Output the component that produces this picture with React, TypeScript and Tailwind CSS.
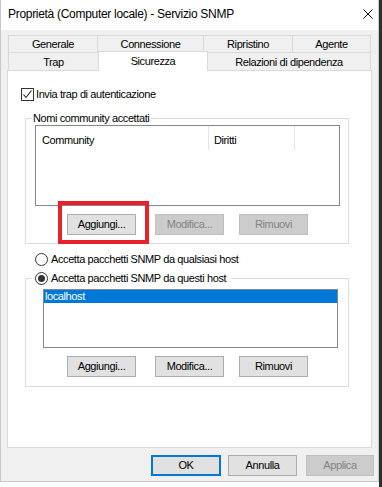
import type { ReactNode } from 'react';

const font = "font-['Liberation_Sans',Arial,sans-serif]";
const ui = `${font} text-[11px] leading-[13px] tracking-[-0.4px] text-black`;

function Btn({
  label,
  disabled,
  primary,
  className = '',
  children,
}: {
  label: string;
  disabled?: boolean;
  primary?: boolean;
  className?: string;
  children?: ReactNode;
}) {
  const look = disabled
    ? 'bg-[#cccccc] border border-[#bfbfbf] text-[#838383]'
    : primary
      ? 'bg-[#e1e1e1] border-2 border-[#0078d7] text-black'
      : 'bg-[#e1e1e1] border border-[#adadad] text-black';
  return (
    <div className={`relative h-[21px] shrink-0 ${className}`}>
      <div className={`h-full w-full flex items-center justify-center ${look}`}>{label}</div>
      {children}
    </div>
  );
}

function Tab({ label, className = '' }: { label: string; className?: string }) {
  return (
    <div
      className={`flex items-center justify-center border-t border-[#d9d9d9] bg-[#f0f0f0] ${className}`}
    >
      {label}
    </div>
  );
}

function Radio({ checked }: { checked?: boolean }) {
  return (
    <span className="w-[13px] h-[13px] rounded-full border border-[#333333] bg-white flex items-center justify-center shrink-0">
      {checked && <span className="w-[7px] h-[7px] rounded-full bg-[#333333]" />}
    </span>
  );
}

function ButtonRow({ first }: { first?: boolean }) {
  return (
    <div className="flex ml-[35px]">
      <Btn label="Aggiungi..." className="w-[69px]">
        {first && (
          <div className="absolute left-[-9px] top-[-13px] w-[91px] h-[43px] border-[4px] border-[#e8202a] pointer-events-none" />
        )}
      </Btn>
      <Btn label="Modifica..." disabled={first} className="w-[69px] ml-[19px]" />
      <Btn label="Rimuovi" disabled={first} className="w-[69px] ml-[15px]" />
    </div>
  );
}

export default function App() {
  return (
    <div className={`w-[382px] h-[487px] bg-white flex items-start ${ui}`}>
      <div className="w-[379px] h-[482px] flex flex-col border-l border-r border-b border-[#c9c9c9]">
        {/* title bar */}
        <div className="h-[30px] bg-white flex items-center justify-between shrink-0">
          <span className="pl-[7px] pb-[1px] text-[12px] tracking-[-0.3px] text-black">
            Proprietà (Computer locale) - Servizio SNMP
          </span>
          <svg width="10" height="10" viewBox="0 0 10 10" className="mr-[5px] mb-[3px]">
            <path d="M0.5 0.5 L9.5 9.5 M9.5 0.5 L0.5 9.5" stroke="#111" strokeWidth="1" />
          </svg>
        </div>

        <div className="flex-1 bg-[#f0f0f0] pt-[5px] pl-[6px] flex flex-col">
          {/* tabs */}
          <div className="flex ml-[1px] h-[17px]">
            <Tab label="Generale" className="w-[89px] border-l" />
            <Tab label="Connessione" className="w-[106px] border-l" />
            <Tab label="Ripristino" className="w-[89px] border-l" />
            <Tab label="Agente" className="w-[79px] border-l border-r" />
          </div>
          <div className="flex ml-[1px] h-[18px] items-end">
            <Tab label="Trap" className="w-[90px] h-[18px] border-l pt-[1px]" />
            <div className="relative z-10 w-[110px] h-[20px] -mb-[1px] bg-white border-t border-l border-r border-[#d9d9d9] flex items-center justify-center pb-[1px]">
              Sicurezza
            </div>
            <Tab label="Relazioni di dipendenza" className="w-[163px] h-[18px] border-r pt-[1px]" />
          </div>

          {/* tab page */}
          <div className="w-[365px] h-[378px] bg-white border border-[#d9d9d9] flex flex-col">
            <div className="flex items-center gap-[2px] mt-[17px] ml-[13px]">
              <span className="w-[13px] h-[13px] border border-[#333333] bg-white flex items-center justify-center">
                <svg width="11" height="11" viewBox="0 0 11 11">
                  <path d="M1.5 5.5 L4 8.5 L9.5 1.5" fill="none" stroke="#222" strokeWidth="1.1" />
                </svg>
              </span>
              <span>Invia trap di autenticazione</span>
            </div>

            <fieldset className="ml-[17px] mt-[11px] w-[324px] border border-[#dcdcdc] px-[6px] pb-[8px]">
              <legend className="px-[1px]">Nomi community accettati</legend>
              <div className="ml-[3px] w-[305px] h-[81px] border border-[#828790] bg-white">
                <div className="flex h-[24px]">
                  <div className="w-[172px] pl-[6px] pt-[8px]">Community</div>
                  <div className="w-px h-full bg-[#e5e5e5]" />
                  <div className="w-[85px] pl-[5px] pt-[8px]">Diritti</div>
                  <div className="w-px h-full bg-[#e5e5e5]" />
                </div>
              </div>
              <div className="mt-[8px]">
                <ButtonRow first />
              </div>
            </fieldset>

            <div className="flex items-center gap-[3px] ml-[27px] mt-[9px]">
              <Radio />
              <span>Accetta pacchetti SNMP da qualsiasi host</span>
            </div>

            <fieldset className="ml-[17px] mt-[6px] w-[324px] border border-[#dcdcdc] px-[6px] pb-[9px]">
              <legend className="px-[3px] flex items-center gap-[3px]">
                <Radio checked />
                <span className="pr-[2px]">Accetta pacchetti SNMP da questi host</span>
              </legend>
              <div className="ml-[11px] mt-[4px] w-[295px] h-[59px] border border-[#828790] bg-white">
                <div className="h-[13px] bg-[#0078d7] text-white pl-[1px]">localhost</div>
              </div>
              <div className="mt-[8px]">
                <ButtonRow />
              </div>
            </fieldset>
          </div>

          {/* dialog buttons */}
          <div className="flex justify-end pr-[4px] mt-[7px]">
            <Btn label="OK" primary className="w-[70px] mr-[7px]" />
            <Btn label="Annulla" className="w-[69px] mr-[9px]" />
            <Btn label="Applica" disabled className="w-[68px]" />
          </div>
        </div>
      </div>
      <div className="w-[3px] h-[487px] bg-[#2e2e2e]" />
    </div>
  );
}
